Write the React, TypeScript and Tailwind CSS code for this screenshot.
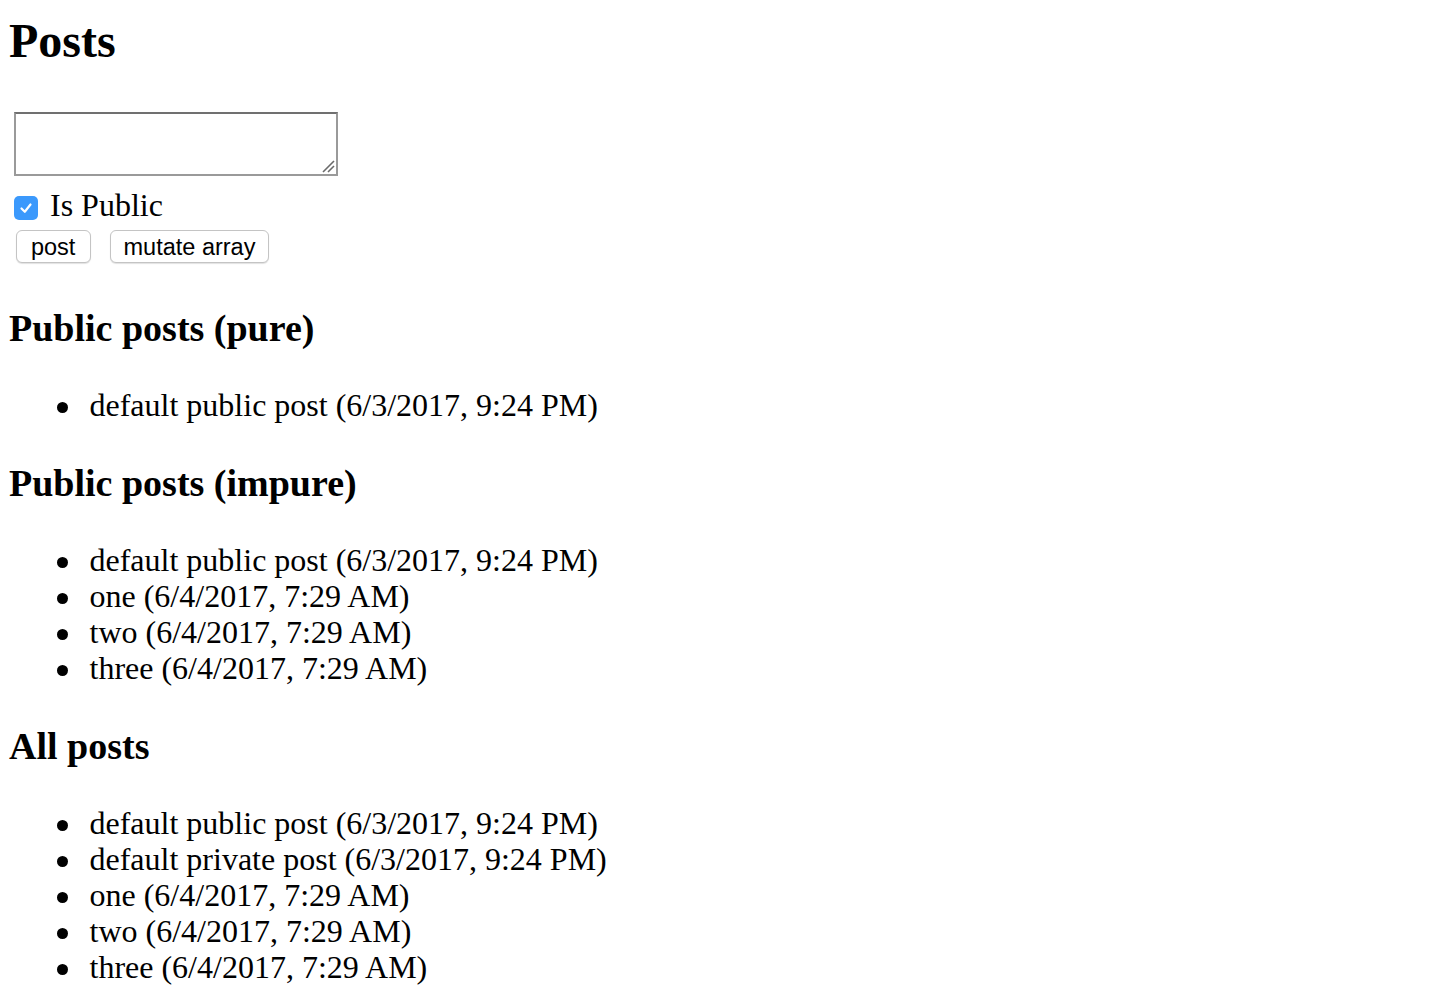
import React from "react";

const pure = ["default public post (6/3/2017, 9:24 PM)"];
const impure = [
  "default public post (6/3/2017, 9:24 PM)",
  "one (6/4/2017, 7:29 AM)",
  "two (6/4/2017, 7:29 AM)",
  "three (6/4/2017, 7:29 AM)",
];
const all = [
  "default public post (6/3/2017, 9:24 PM)",
  "default private post (6/3/2017, 9:24 PM)",
  "one (6/4/2017, 7:29 AM)",
  "two (6/4/2017, 7:29 AM)",
  "three (6/4/2017, 7:29 AM)",
];

function List({ items, last }: { items: string[]; last?: boolean }) {
  return (
    <ul className={last ? "mb-0" : "mb-[39px]"}>
      {items.map((t, i) => (
        <li key={i} className="flex text-[32px] leading-[36px] whitespace-nowrap">
          <span className="mt-[15px] ml-[48px] mr-[21.5px] h-[11px] w-[11px] shrink-0 rounded-full bg-black" />
          <span>{t}</span>
        </li>
      ))}
    </ul>
  );
}

function H2({ children }: { children: React.ReactNode }) {
  return (
    <h2 className="mb-[37px] text-[38px] font-bold leading-[43px]">{children}</h2>
  );
}

export default function App() {
  return (
    <div
      className="min-h-screen bg-white pl-[9px] text-black"
      style={{ fontFamily: '"Liberation Serif", "Times New Roman", serif' }}
    >
      <h1 className="pt-[14px] text-[48px] font-bold leading-[54px]">Posts</h1>
      <div className="relative mt-[44px] ml-[5px] h-[64px] w-[324px]">
        <textarea
          className="block h-full w-full resize-none border-2 border-[#9a9a9a] border-t-[#707070] bg-white outline-none"
          defaultValue=""
        />
        <svg className="pointer-events-none absolute right-[3px] bottom-[3px]" width="14" height="14" viewBox="0 0 14 14">
          <path d="M2 13 L13 2" stroke="#6a6a6a" strokeWidth="1.6" />
          <path d="M7 13 L13 7" stroke="#6a6a6a" strokeWidth="1.6" />
        </svg>
      </div>
      <div className="mt-[11px] flex h-[36px] items-start">
        <span className="mt-[9px] ml-[5px] flex h-[24px] w-[24px] items-center justify-center rounded-[5px] bg-[#3b99fc]">
          <svg width="16" height="16" viewBox="0 0 16 16" fill="none">
            <path d="M3.5 8.5 L6.8 11.8 L12.5 4.5" stroke="white" strokeWidth="2.2" strokeLinecap="round" strokeLinejoin="round" />
          </svg>
        </span>
        <span className="ml-[12px] text-[32px] leading-[36px]">Is Public</span>
      </div>
      <div
        className="mt-[7px] ml-[6.7px] flex gap-[19.3px]"
        style={{ fontFamily: '"Liberation Sans", Arial, sans-serif' }}
      >
        <button className="h-[33px] w-[75px] rounded-[6px] border border-[#c4c4c4] bg-white pt-[2px] text-[23.5px] leading-[29px] shadow-[0_1px_1px_rgba(0,0,0,0.12)]">
          post
        </button>
        <button className="h-[33px] w-[159px] rounded-[6px] border border-[#c4c4c4] bg-white pt-[2px] text-[23.5px] leading-[29px] shadow-[0_1px_1px_rgba(0,0,0,0.12)]">
          mutate array
        </button>
      </div>
      <div className="mt-[43.8px]">
        <H2>Public posts (pure)</H2>
        <List items={pure} />
        <H2>Public posts (impure)</H2>
        <List items={impure} />
        <H2>All posts</H2>
        <List items={all} last />
      </div>
    </div>
  );
}
